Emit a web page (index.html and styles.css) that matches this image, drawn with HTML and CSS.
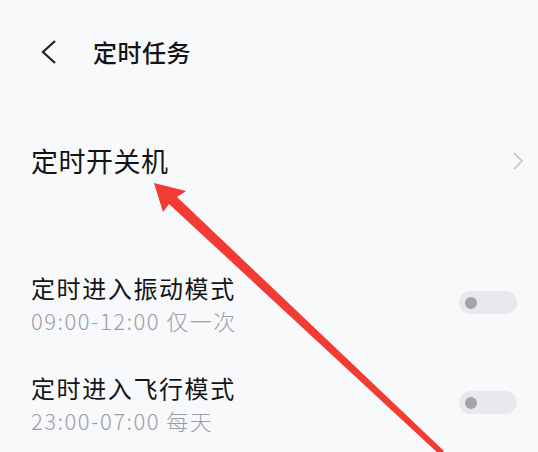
FILE: index.html
```html
<!DOCTYPE html>
<html lang="zh-CN">
<head>
<meta charset="utf-8">
<link rel="stylesheet" href="styles.css">
</head>
<body>
<div class="page">
  <header class="header">
    <svg class="back" width="18" height="26" viewBox="0 0 18 26"><polyline points="15,2 3,13 15,24" fill="none" stroke="#222" stroke-width="2.2" stroke-linejoin="miter"/></svg>
    <h1 class="title">定时任务</h1>
  </header>
  <div class="nav-item">
    <span class="nav-label">定时开关机</span>
    <svg class="chev" width="12" height="20" viewBox="0 0 12 20"><polyline points="2,2 10,10 2,18" fill="none" stroke="#c2c2c6" stroke-width="1.6"/></svg>
  </div>
  <div class="list">
    <div class="row">
      <div class="texts">
        <div class="row-title">定时进入振动模式</div>
        <div class="row-sub">09:00-12:00 仅一次</div>
      </div>
      <div class="toggle"><span class="knob"></span></div>
    </div>
    <div class="row">
      <div class="texts">
        <div class="row-title">定时进入飞行模式</div>
        <div class="row-sub">23:00-07:00 每天</div>
      </div>
      <div class="toggle"><span class="knob"></span></div>
    </div>
  </div>
  <svg class="arrow" width="538" height="452" viewBox="0 0 538 452">
    <polygon points="154,183 186,191 177,197 444,451 440,455 169,204 163,212" fill="#f23b35"/>
  </svg>
</div>
</body>
</html>
```
FILE: styles.css
```css
html, body {
  margin: 0;
  padding: 0;
}
body {
  background: #f8f9fb;
  font-family: "Noto Sans CJK SC", "Noto Sans", sans-serif;
  color: #141414;
  width: 538px;
  height: 452px;
  overflow: hidden;
}
.page {
  position: relative;
  width: 538px;
  height: 452px;
}
.header {
  height: 104px;
  display: flex;
  align-items: center;
  padding-left: 40px;
  box-sizing: border-box;
}
.back {
  display: block;
  margin-right: 35px;
}
.title {
  margin: 0;
  font-size: 24px;
  font-weight: 500;
  letter-spacing: 0.5px;
  line-height: 30px;
}
.nav-item {
  height: 114px;
  display: flex;
  align-items: center;
  justify-content: space-between;
  padding: 0 14px 0 31px;
}
.nav-label {
  font-size: 27px;
  line-height: 34px;
  letter-spacing: 0.5px;
}
.chev {
  display: block;
}
.list {
  margin-top: 54px;
  padding: 0 21px 0 31px;
}
.row {
  height: 100px;
  display: flex;
  align-items: flex-start;
  justify-content: space-between;
}
.texts {
  display: flex;
  flex-direction: column;
  gap: 2px;
}
.row-title {
  font-size: 24px;
  line-height: 32px;
  letter-spacing: 1.6px;
}
.row-sub {
  font-size: 22px;
  font-weight: 300;
  line-height: 28px;
  color: #9d9da5;
  letter-spacing: 1.5px;
}
.toggle {
  margin-top: 19px;
  width: 58px;
  height: 23px;
  border-radius: 12px;
  background: #e8e9ed;
  display: flex;
  align-items: center;
  padding-left: 6px;
  box-sizing: border-box;
}
.knob {
  width: 12px;
  height: 12px;
  border-radius: 50%;
  background: #a4a4a8;
}
.arrow {
  position: absolute;
  left: 0;
  top: 0;
  pointer-events: none;
}
```
